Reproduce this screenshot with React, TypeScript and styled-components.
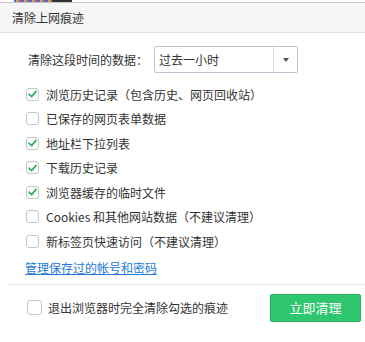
import React from 'react';
import styled, { createGlobalStyle } from 'styled-components';

const GlobalStyle = createGlobalStyle`
	html, body {
		margin: 0;
		padding: 0;
		background: #fff;
	}
	body {
		font-family: "Noto Sans CJK SC", "Noto Sans", sans-serif;
		font-size: 12px;
		color: #333;
		width: 365px;
		height: 342px;
		overflow: hidden;
	}
`;

const TopEdge = styled.div`
	height: 2px;
	display: flex;
	padding-left: 14px;
`;

const Dots = styled.div`
	width: 38px;
	height: 2px;
	background: repeating-linear-gradient(90deg, #3a6fd0 0 2px, #e0a040 2px 4px, #888 4px 6px, #b04a9a 6px 8px);
`;

const DarkBar = styled.div`
	width: 20px;
	height: 2px;
	background: #333;
`;

const Header = styled.header`
	height: 29px;
	background: #f5f5f5;
	border-top: 1px solid #c8c8c8;
	border-bottom: 1px solid #dedede;
	display: flex;
	align-items: center;
	padding-left: 12px;
	font-size: 12px;
	color: #333;
`;

const Body = styled.div`
	padding: 13px 0 0 26px;
`;

const TimeRow = styled.div`
	display: flex;
	align-items: center;
	gap: 6px;
	padding-left: 2px;
`;

const Select = styled.div`
	width: 142px;
	height: 25px;
	border: 1px solid #b9c6d3;
	border-radius: 2px;
	display: flex;
	align-items: stretch;
	background: #fff;
`;

const SelectValue = styled.div`
	flex: 1;
	display: flex;
	align-items: center;
	padding-left: 4px;
`;

const SelectArrow = styled.div`
	width: 23px;
	border-left: 1px solid #d6d6d6;
	display: flex;
	align-items: center;
	justify-content: center;
	&::after {
		content: '';
		border-left: 3.5px solid transparent;
		border-right: 3.5px solid transparent;
		border-top: 4px solid #555;
	}
`;

const List = styled.div`
	margin-top: 9px;
	display: flex;
	flex-direction: column;
`;

const Row = styled.label`
	height: 24.5px;
	display: flex;
	align-items: center;
	gap: 7px;
	white-space: nowrap;
`;

const Box = styled.span<{ $size?: number }>`
	width: ${p => p.$size ?? 13}px;
	height: ${p => p.$size ?? 13}px;
	box-sizing: border-box;
	border: 1px solid #c6c6c6;
	border-radius: 3px;
	background: #fff;
	display: flex;
	align-items: center;
	justify-content: center;
	flex-shrink: 0;
`;

const LinkRow = styled.div`
	height: 25px;
	display: flex;
	align-items: center;
	padding-top: 1px;
	margin-left: -1px;
`;

const Link = styled.a`
	color: #2478d8;
	text-decoration: underline;
	cursor: pointer;
`;

const Divider = styled.div`
	height: 1px;
	background: #e6e6e6;
	margin: 4px 0 0 7px;
`;

const Footer = styled.div`
	display: flex;
	align-items: center;
	justify-content: space-between;
	padding: 9px 4px 0 27px;
`;

const FooterCheck = styled.label`
	display: flex;
	align-items: center;
	gap: 6px;
`;

const CleanButton = styled.button`
	width: 91px;
	height: 28px;
	border: 1px solid #27b362;
	border-radius: 2px;
	background: #2ec66f;
	color: #fff;
	font-family: inherit;
	font-size: 13px;
	cursor: pointer;
	padding: 0;
`;

const Check = () => (
	<svg width="9" height="8" viewBox="0 0 9 8">
		<path d="M1 4.2 L3.6 6.6 L8 1.4" fill="none" stroke="#2db35b" strokeWidth="1.7" strokeLinecap="round" strokeLinejoin="round" />
	</svg>
);

const items: { label: string; checked: boolean }[] = [
	{ label: '浏览历史记录（包含历史、网页回收站）', checked: true },
	{ label: '已保存的网页表单数据', checked: false },
	{ label: '地址栏下拉列表', checked: true },
	{ label: '下载历史记录', checked: true },
	{ label: '浏览器缓存的临时文件', checked: true },
	{ label: 'Cookies 和其他网站数据（不建议清理）', checked: false },
	{ label: '新标签页快速访问（不建议清理）', checked: false },
];

const App: React.FunctionComponent = () => {
	return (
		<>
			<GlobalStyle />
			<TopEdge>
				<Dots />
				<DarkBar />
			</TopEdge>
			<Header>清除上网痕迹</Header>
			<Body>
				<TimeRow>
					<span>清除这段时间的数据：</span>
					<Select>
						<SelectValue>过去一小时</SelectValue>
						<SelectArrow />
					</Select>
				</TimeRow>
				<List>
					{items.map(item => (
						<Row key={item.label}>
							<Box>{item.checked && <Check />}</Box>
							{item.label}
						</Row>
					))}
				</List>
				<LinkRow>
					<Link>管理保存过的帐号和密码</Link>
				</LinkRow>
			</Body>
			<Divider />
			<Footer>
				<FooterCheck>
					<Box $size={15} />
					退出浏览器时完全清除勾选的痕迹
				</FooterCheck>
				<CleanButton type="button">立即清理</CleanButton>
			</Footer>
		</>
	);
};

export default App;
